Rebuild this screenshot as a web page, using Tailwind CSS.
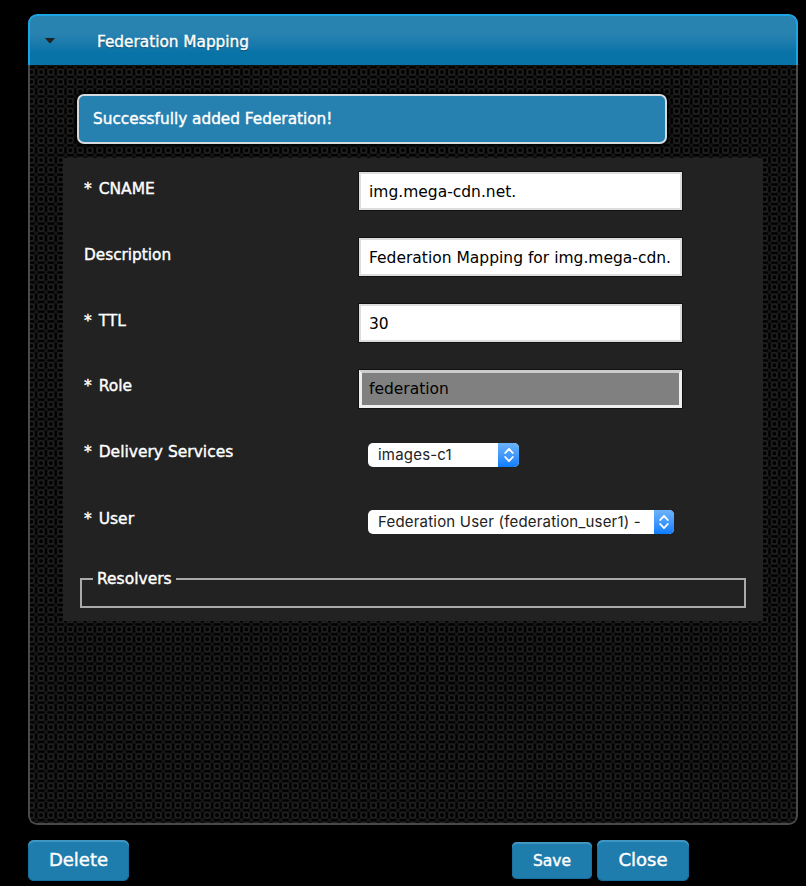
<!DOCTYPE html>
<html lang="en">
<head>
<meta charset="utf-8">
<title>Federation Mapping</title>
<script src="https://cdn.jsdelivr.net/npm/@tailwindcss/browser@4"></script>
</head>
<body class="bg-black w-[806px] h-[886px] overflow-hidden text-[15.5px] leading-5 text-white font-['DejaVu_Sans',sans-serif]">
<div class="pt-[14px] pl-7">
  <section class="relative w-[770px] h-[811px] rounded-[9px] overflow-hidden">
    <svg class="absolute inset-0 w-full h-full" aria-hidden="true">
      <defs>
        <g id="ring" fill="none" stroke="#252525" stroke-width="1.5">
          <circle cx="4.89" cy="4.89" r="2.9"/>
          <path d="M0 0l2.2 2.2M9.78 0l-2.2 2.2M0 9.78l2.2-2.2M9.78 9.78l-2.2-2.2" stroke="#171717" stroke-width="1.7"/>
        </g>
        <g id="ring-row">
          <use href="#ring"/><use href="#ring" x="9.778"/><use href="#ring" x="19.556"/>
          <use href="#ring" x="29.333"/><use href="#ring" x="39.111"/><use href="#ring" x="48.889"/>
          <use href="#ring" x="58.667"/><use href="#ring" x="68.444"/><use href="#ring" x="78.222"/>
        </g>
        <pattern id="rings" x="8.2" y="53.2" width="88" height="88" patternUnits="userSpaceOnUse">
          <use href="#ring-row"/><use href="#ring-row" y="9.778"/><use href="#ring-row" y="19.556"/>
          <use href="#ring-row" y="29.333"/><use href="#ring-row" y="39.111"/><use href="#ring-row" y="48.889"/>
          <use href="#ring-row" y="58.667"/><use href="#ring-row" y="68.444"/><use href="#ring-row" y="78.222"/>
        </pattern>
      </defs>
      <rect width="100%" height="100%" fill="#000"/>
      <rect width="100%" height="100%" fill="url(#rings)"/>
    </svg>
    <div class="absolute inset-0 rounded-[9px] border-2 border-[#494949]"></div>
    <header class="relative h-[51px] rounded-t-[9px] border-2 border-b-0 border-[#1ba5e5] bg-linear-to-b from-[#2883b1] from-35% to-[#0873a7] to-75% flex items-center">
      <svg class="ml-[14px] w-3 h-[7px] shrink-0" viewBox="0 0 12 7"><path d="M.8 1h10.4L6 6.5z" fill="#222"/></svg>
      <h1 class="ml-[41px] mt-[3px] whitespace-nowrap text-[15.3px] [-webkit-text-stroke:0.4px_white] [text-shadow:0_1px_1px_#003b5a]">Federation Mapping</h1>
    </header>
    <div class="relative ml-[49px] mt-[29px] w-[590px] h-[50px] rounded-[7px] border-2 border-[#d4dade] bg-[#2681b0] shadow-[0_0_3px_2px_#000] pl-[14px] pt-[13px] text-[15.3px] [-webkit-text-stroke:0.4px_white]">Successfully added Federation!</div>
    <form class="relative ml-[35px] mt-[14px] w-[700px] h-[463px] bg-[#222] pt-[14px] pl-[21px]">
      <div class="flex h-[66px]"><label class="w-[275px] pt-[7px] [-webkit-text-stroke:0.4px_white]"><span class="mr-[2px]">*</span> CNAME</label><div class="w-[323px] h-[38px] bg-white border-2 border-[#ddd] text-black pl-2 pt-2 whitespace-nowrap shadow-[0_0_0_1px_#111]">img.mega-cdn.net.</div></div>
      <div class="flex h-[66px]"><label class="w-[275px] pt-[7px] text-[15.3px] [-webkit-text-stroke:0.4px_white]">Description</label><div class="w-[323px] h-[38px] bg-white border-2 border-[#ddd] text-black pl-2 pt-2 whitespace-nowrap shadow-[0_0_0_1px_#111]">Federation Mapping for img.mega-cdn.</div></div>
      <div class="flex h-[66px]"><label class="w-[275px] pt-[7px] [-webkit-text-stroke:0.4px_white]"><span class="mr-[2px]">*</span> TTL</label><div class="w-[323px] h-[38px] bg-white border-2 border-[#ddd] text-black pl-2 pt-2 whitespace-nowrap shadow-[0_0_0_1px_#111]">30</div></div>
      <div class="flex h-[66px]"><label class="w-[275px] pt-[6px] [-webkit-text-stroke:0.4px_white]"><span class="mr-[2px]">*</span> Role</label><div class="w-[323px] h-[38px] bg-[#808080] border-[3px] border-[#eee] border-t-[#ccc] text-black pl-[7px] pt-[6px] whitespace-nowrap shadow-[0_0_0_1px_#111]">federation</div></div>
      <div class="flex h-[67px]"><label class="w-[284px] pt-[6px] [-webkit-text-stroke:0.4px_white]"><span class="mr-[2px]">*</span> Delivery Services</label>
        <div class="mt-[7px] flex w-[151px] h-6 rounded-[5px] overflow-hidden bg-white text-[#222] font-['Inter',sans-serif] text-[15px] tracking-[0.2px] leading-6"><span class="flex-1 pl-[10px] whitespace-nowrap">images-c1</span><span class="w-[21px] bg-linear-to-b from-[#6bb3fa] to-[#087dff] flex items-center justify-center"><svg class="w-[10px] h-4" viewBox="0 0 10 16" fill="none" stroke="white" stroke-width="1.8" stroke-linecap="round" stroke-linejoin="round"><path d="M1.2 6L5 1.8 8.8 6M1.2 10L5 14.2 8.8 10"/></svg></span></div></div>
      <div class="flex h-[66px]"><label class="w-[284px] pt-[6px] [-webkit-text-stroke:0.4px_white]"><span class="mr-[2px]">*</span> User</label>
        <div class="mt-[7px] flex w-[306px] h-6 rounded-[5px] overflow-hidden bg-white text-[#222] font-['Inter',sans-serif] text-[15px] tracking-[0.2px] leading-6"><span class="flex-1 pl-[10px] whitespace-nowrap">Federation User (federation_user1) -</span><span class="w-5 bg-linear-to-b from-[#6bb3fa] to-[#087dff] flex items-center justify-center"><svg class="w-[10px] h-4" viewBox="0 0 10 16" fill="none" stroke="white" stroke-width="1.8" stroke-linecap="round" stroke-linejoin="round"><path d="M1.2 6L5 1.8 8.8 6M1.2 10L5 14.2 8.8 10"/></svg></span></div></div>
      <fieldset class="-ml-1 w-[666px] h-[39px] border-2 border-[#aaa] pl-[11px]"><legend class="px-[4px] [-webkit-text-stroke:0.4px_white]">Resolvers</legend></fieldset>
    </form>
  </section>
  <footer class="mt-[15px] flex items-start [-webkit-text-stroke:0.4px_white] [text-shadow:0_1px_1px_#003b5a]">
    <button type="button" class="w-[101px] h-[41px] rounded-[6px] bg-[#1f7dae] shadow-[inset_0_2px_1px_#4297c3,inset_0_0_0_1px_#176d9c] text-[18px] pb-[2px]">Delete</button>
    <button type="button" class="ml-[383px] mt-[2px] w-[80px] h-[37px] rounded-[5px] bg-[#1f7dae] shadow-[inset_0_2px_1px_#4297c3,inset_0_0_0_1px_#176d9c]">Save</button>
    <button type="button" class="ml-[5px] w-[92px] h-[41px] rounded-[6px] bg-[#1f7dae] shadow-[inset_0_2px_1px_#4297c3,inset_0_0_0_1px_#176d9c] text-[18px] pb-[2px]">Close</button>
  </footer>
</div>
</body>
</html>
